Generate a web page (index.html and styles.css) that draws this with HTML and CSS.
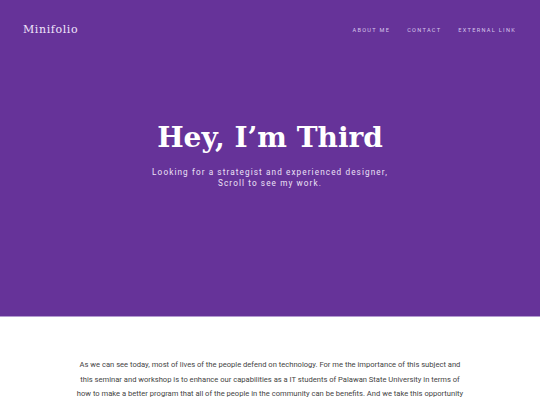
FILE: index.html
```html
<!DOCTYPE html>
<html lang="en">

<head>
    <meta charset="UTF-8">
    <meta name="viewport" content="width=device-width, initial-scale=1.0">
    <title>Minifolio</title>
    <link rel="stylesheet" href="styles.css">
</head>

<body>
    <header class="hero">
        <nav class="nav">
            <a class="brand" href="#">Minifolio</a>
            <ul class="menu">
                <li><a href="#about">About me</a></li>
                <li><a href="#contact">Contact</a></li>
                <li><a href="#">External link</a></li>
            </ul>
        </nav>
        <div class="intro">
            <h1>Hey, I’m Third</h1>
            <p>Looking for a strategist and experienced designer,<br>Scroll to see my work.</p>
        </div>
    </header>

    <section class="about" id="about">
        <p>As we can see today, most of lives of the people defend on technology. For me the importance of this subject and
            this seminar and workshop is to enhance our capabilities as a IT students of Palawan State University in terms of
            how to make a better program that all of the people in the community can be benefits. And we take this opportunity
            to put into practice the skills and knowledge we have learned from our instructors and speakers during the seminar.</p>
    </section>
</body>

</html>
```

FILE: styles.css
```css
body {
    margin: 0;
    padding: 0;
    font-family: Roboto, "Liberation Sans", sans-serif;
    background: #fff;
}

a {
    text-decoration: none;
    color: inherit;
}

.hero {
    background: #663399;
    color: #fff;
    height: 316px;
    border-bottom: 1px solid #b49bd0;
    display: flex;
    flex-direction: column;
}

.nav {
    display: flex;
    justify-content: space-between;
    align-items: center;
    padding: 22px 24px 0 23px;
    height: 16px;
}

.brand {
    font-family: "DejaVu Serif", serif;
    font-size: 11px;
    line-height: 16px;
    letter-spacing: 0.6px;
    color: #f1e6fb;
}

.menu {
    list-style: none;
    display: flex;
    gap: 17px;
    margin: 0;
    padding: 0;
    font-size: 5.6px;
    line-height: 14px;
}

.menu a {
    text-transform: uppercase;
    letter-spacing: 1.3px;
    color: #d8c6ec;
}

.intro {
    text-align: center;
    margin-top: 82px;
}

h1 {
    font-family: "DejaVu Serif", serif;
    font-weight: bold;
    font-size: 28px;
    margin: 0;
    line-height: 36px;
}

.intro p {
    font-size: 8.2px;
    letter-spacing: 1.1px;
    line-height: 11px;
    margin: 11px 0 0;
    color: #ece2f7;
}

.about {
    padding: 41px 74px 0;
    text-align: center;
}

.about p {
    margin: 0;
    font-size: 7.6px;
    line-height: 14.5px;
    color: #444;
}
```
